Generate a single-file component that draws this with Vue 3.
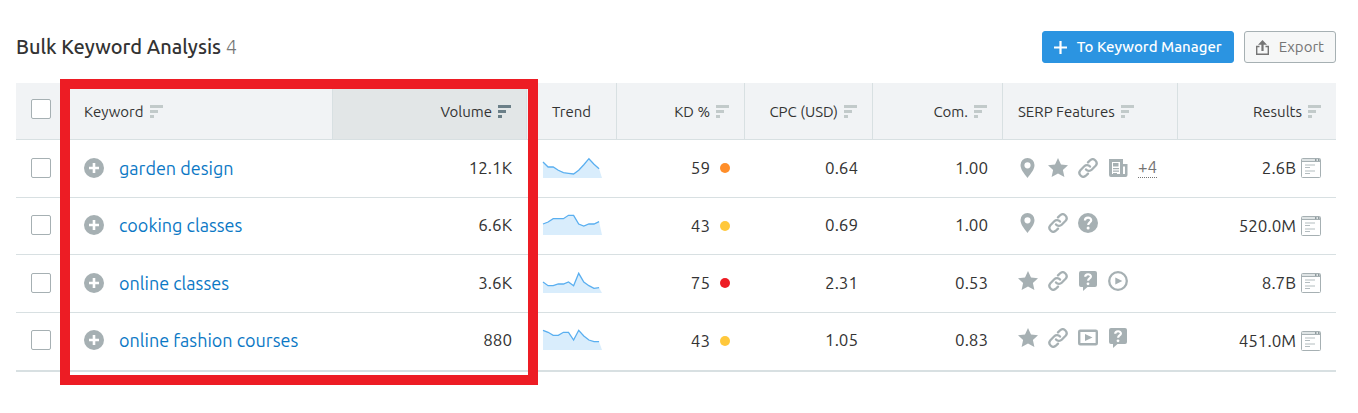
<template>
  <main class="page">
    <header class="toolbar">
      <h1 class="title">Bulk Keyword Analysis <span class="count">{{ rows.length }}</span></h1>
      <div class="actions">
        <button type="button" class="btn btn-primary">
          <svg width="13" height="13" viewBox="0 0 13 13" aria-hidden="true">
            <path d="M6.5 0v13M0 6.5h13" stroke="currentColor" stroke-width="2.2" />
          </svg>
          To Keyword Manager
        </button>
        <button type="button" class="btn btn-default">
          <svg width="13" height="15" viewBox="0 0 13 15" aria-hidden="true">
            <path d="M3.5 6.5H.7v7.8h11.6V6.5H9.5" fill="none" stroke="currentColor" stroke-width="1.4" />
            <path d="M6.5 0l4.5 4.8H7.6V11H5.4V4.8H2z" fill="currentColor" />
          </svg>
          Export
        </button>
      </div>
    </header>

    <div class="table-wrap">
      <table class="table">
        <colgroup>
          <col class="col-check" />
          <col />
          <col v-for="c in columns.slice(1)" :key="c.key" :class="'col-' + c.key" />
        </colgroup>
        <thead>
          <tr>
            <th class="cell-check"><input type="checkbox" class="check" aria-label="Select all" /></th>
            <th v-for="c in columns" :key="c.key" :class="[c.align, { active: c.active }]">
              <span class="head-label">
                {{ c.label }}
                <svg v-if="c.sort" class="sort" width="13" height="13" viewBox="0 0 13 13" aria-hidden="true">
                  <path d="M0 0h13v3H0zM0 5h8v3H0zM0 10h4v3H0z" fill="currentColor" />
                </svg>
              </span>
            </th>
          </tr>
        </thead>
        <tbody>
          <tr v-for="row in rows" :key="row.keyword">
            <td class="cell-check"><input type="checkbox" class="check" :aria-label="row.keyword" /></td>
            <td>
              <div class="keyword">
                <button type="button" class="add" :aria-label="'Add ' + row.keyword">
                  <svg width="20" height="20" viewBox="0 0 20 20">
                    <circle cx="10" cy="10" r="10" fill="#a6b0b3" />
                    <path d="M10 5v10M5 10h10" stroke="#fff" stroke-width="2.6" />
                  </svg>
                </button>
                <a href="#" class="link">{{ row.keyword }}</a>
              </div>
            </td>
            <td class="right">{{ row.volume }}</td>
            <td class="cell-trend">
              <svg class="spark" width="60" height="20" viewBox="0 0 60 20" aria-hidden="true">
                <polygon :points="areaPoints(row.trend)" fill="#d9edfc" />
                <polyline :points="linePoints(row.trend)" fill="none" stroke="#5aaff0" stroke-width="1.3" />
              </svg>
            </td>
            <td class="right">
              <span class="kd">{{ row.kd }}<i class="dot" :class="row.level"></i></span>
            </td>
            <td class="right">{{ row.cpc }}</td>
            <td class="right">{{ row.com }}</td>
            <td>
              <div class="features" :class="{ compact: !row.more }">
                <svg v-for="f in row.features" :key="f" width="20" height="20" viewBox="0 0 20 20" aria-hidden="true">
                  <path v-if="f === 'pin'" fill-rule="evenodd" d="M9.5 0a7 7 0 0 1 7 7c0 4.5-3.6 8.5-7 13-3.4-4.5-7-8.5-7-13a7 7 0 0 1 7-7zm0 4.200a3.100 3.100 0 1 0 0 6.200 3.100 3.100 0 0 0 0-6.200z" />
                  <path v-else-if="f === 'star'" d="M10 0l3 6.600 7 .7-5.100 4.800 1.500 7L10 15.600l-6.400 3.500 1.500-7L0 7.300l7-.7z" />
                  <g v-else-if="f === 'link'" fill="none" stroke="currentColor" stroke-width="2.3" stroke-linecap="round">
                    <path d="M8 11.400c1.500 1.800 4.200 1.800 5.700.3l3.900-3.900a3.900 3.900 0 0 0-5.500-5.500L10 4.400" />
                    <path d="M12 8.600C10.500 6.800 7.800 6.800 6.300 8.300l-3.900 3.900a3.900 3.900 0 0 0 5.500 5.500l2.100-2.100" />
                  </g>
                  <template v-else-if="f === 'news'">
                    <path fill-rule="evenodd" d="M1 1h14v5h4.500v11a2 2 0 0 1-2 2H3a2 2 0 0 1-2-2zm3 3v12h8V4zm11 4.500V16h2V8.500z" />
                    <path d="M5 5h5.500v3.500H5zM5 10h6v1.200H5zM5 12.500h6v1.200H5zM5 15h4v1H5z" />
                  </template>
                  <template v-else-if="f === 'question'">
                    <circle cx="10" cy="10" r="10" />
                    <path class="mark" d="M6.900 7.500C7 3.700 13.200 3.800 13.200 7.200c0 2.200-3 2.300-3 4.800" />
                    <circle class="mark-dot" cx="10.1" cy="15" r="1.5" />
                  </template>
                  <template v-else-if="f === 'faq'">
                    <path d="M3 0h14a2 2 0 0 1 2 2v12a2 2 0 0 1-2 2H9.500L5 20v-4H3a2 2 0 0 1-2-2V2a2 2 0 0 1 2-2z" />
                    <path class="mark" d="M7.200 5.800C7.300 2.400 12.900 2.500 12.900 5.500c0 1.900-2.800 2-2.800 4.200" />
                    <circle class="mark-dot" cx="10" cy="12.8" r="1.4" />
                  </template>
                  <template v-else-if="f === 'play'">
                    <circle cx="10" cy="10" r="8.8" fill="none" stroke="currentColor" stroke-width="2.3" />
                    <path d="M7.300 6.500l7 3.500-7 3.500z" />
                  </template>
                  <template v-else-if="f === 'video'">
                    <rect x="1.2" y="2.7" width="17.6" height="13.6" rx="1" fill="none" stroke="currentColor" stroke-width="2.4" />
                    <path d="M7 6l7.500 3.500L7 13z" />
                  </template>
                </svg>
                <a v-if="row.more" href="#" class="more">+{{ row.more }}</a>
              </div>
            </td>
            <td class="right">
              <span class="results">
                {{ row.results }}
                <svg width="20" height="20" viewBox="0 0 20 20" aria-hidden="true">
                  <rect x=".5" y=".5" width="19" height="19" rx="1" fill="#fff" stroke="#a6b0b3" />
                  <path d="M1 1h18v2H1z" fill="#dfe4e5" />
                  <path d="M1 3.500h18" stroke="#a6b0b3" />
                  <path d="M14 1h1.500v2H14zM17 1h1.500v2H17z" fill="#8f9b9f" />
                  <path d="M4 7h10M4 9.500h5M4 13h10M4 15.500h5" stroke="#b4bdc0" stroke-width="1.2" />
                </svg>
              </span>
            </td>
          </tr>
        </tbody>
      </table>
      <div class="highlight"></div>
    </div>
  </main>
</template>

<script setup>
const columns = [
  { key: 'keyword', label: 'Keyword', sort: true },
  { key: 'volume', label: 'Volume', sort: true, align: 'right', active: true },
  { key: 'trend', label: 'Trend', align: 'center' },
  { key: 'kd', label: 'KD %', sort: true, align: 'right' },
  { key: 'cpc', label: 'CPC (USD)', sort: true, align: 'right' },
  { key: 'com', label: 'Com.', sort: true, align: 'right' },
  { key: 'serp', label: 'SERP Features', sort: true },
  { key: 'results', label: 'Results', sort: true, align: 'right' }
]

const rows = [
  {
    keyword: 'garden design',
    volume: '12.1K',
    trend: [16, 11, 11, 7.7, 5.3, 4.7, 4, 7.7, 13.3, 19.3, 13.7, 9.3],
    kd: 59,
    level: 'orange',
    cpc: '0.64',
    com: '1.00',
    features: ['pin', 'star', 'link', 'news'],
    more: 4,
    results: '2.6B'
  },
  {
    keyword: 'cooking classes',
    volume: '6.6K',
    trend: [11, 13, 16.3, 16.3, 16.3, 19.7, 19.7, 11, 9, 11, 11, 13.3],
    kd: 43,
    level: 'yellow',
    cpc: '0.69',
    com: '1.00',
    features: ['pin', 'link', 'question'],
    results: '520.0M'
  },
  {
    keyword: 'online classes',
    volume: '3.6K',
    trend: [11, 7.3, 7.3, 9, 9, 11, 7.3, 19.7, 11, 7.3, 4.7, 5.3],
    kd: 75,
    level: 'red',
    cpc: '2.31',
    com: '0.53',
    features: ['star', 'link', 'faq', 'play'],
    results: '8.7B'
  },
  {
    keyword: 'online fashion courses',
    volume: '880',
    trend: [19.7, 17.7, 14.7, 14.7, 17.7, 17.7, 10, 19.7, 14, 10, 8.3, 8.3],
    kd: 43,
    level: 'yellow',
    cpc: '1.05',
    com: '0.83',
    features: ['star', 'link', 'video', 'faq'],
    results: '451.0M'
  }
]

// 12 months, evenly spaced
const linePoints = (trend) => trend.map((v, i) => `${i * 5.1},${20 - v}`).join(' ')

const areaPoints = (trend) => `0,20 ${linePoints(trend)} 59,20`
</script>

<style>
body {
  margin: 0;
  background: #fff;
}
</style>

<style scoped>
.page {
  padding: 31px 22px 28px 16px;
  font-family: Ubuntu, "Noto Sans", "Open Sans", sans-serif;
  font-size: 17px;
  line-height: 24px;
  color: #333;
}

.toolbar {
  display: flex;
  align-items: center;
  justify-content: space-between;
  margin-bottom: 20px;
}

.title {
  margin: 0;
  font-size: 20px;
  line-height: 32px;
  font-weight: 500;
}

.count {
  font-weight: 300;
  color: #777;
}

.actions {
  display: flex;
  gap: 10px;
}

.btn {
  display: flex;
  align-items: center;
  gap: 10px;
  height: 32px;
  padding: 0 11px;
  border: 1px solid transparent;
  border-radius: 3px;
  font-family: inherit;
  font-size: 15px;
  line-height: 20px;
  cursor: pointer;
}

.btn-primary {
  background: #2b94e1;
  border-color: #2b94e1;
  color: #fff;
  font-weight: 500;
}

.btn-default {
  background: #f6f7f7;
  border-color: #a6b0b3;
  color: #757575;
}

.table-wrap {
  position: relative;
}

.table {
  width: 100%;
  table-layout: fixed;
  border-collapse: separate;
  border-spacing: 0;
}

.col-check {
  width: 53px;
}

.col-volume {
  width: 194px;
}

.col-trend {
  width: 90px;
}

.col-kd,
.col-cpc {
  width: 128px;
}

.col-com {
  width: 130px;
}

.col-serp {
  width: 175px;
}

.col-results {
  width: 158px;
}

th {
  height: 56px;
  padding: 0 15px;
  background: #f1f3f5;
  border-bottom: 1px solid #d8e0e2;
  border-right: 1px solid #d8e0e2;
  font-size: 15px;
  font-weight: 400;
  text-align: left;
  white-space: nowrap;
}

th.cell-check,
th:last-child {
  border-right: 0;
}

th.active {
  background: #e2e6e7;
}

td {
  height: 54px;
  padding: 0 15px 2px;
  border-bottom: 1px solid #d8e0e2;
  white-space: nowrap;
}

td.cell-trend {
  padding-left: 16px;
}

tbody tr:nth-child(odd) td {
  height: 55px;
}

tbody tr:last-child td {
  padding-bottom: 3px;
  border-bottom-width: 2px;
}

.right {
  text-align: right;
}

.center {
  text-align: center;
}

.head-label {
  display: inline-flex;
  align-items: center;
  gap: 6px;
  vertical-align: middle;
}

.sort {
  color: #c2caca;
}

.active .sort {
  color: #6b7f88;
}

.check {
  appearance: none;
  display: block;
  width: 20px;
  height: 20px;
  margin: 0;
  background: #fff;
  border: 1px solid #a6b0b3;
  border-radius: 2px;
}

th .check {
  margin-bottom: 4px;
}

.check:checked {
  background: #2b94e1;
}

.keyword {
  display: flex;
  align-items: center;
  gap: 15px;
}

.add {
  width: 20px;
  height: 20px;
  padding: 0;
  border: 0;
  background: none;
  cursor: pointer;
}

.add svg,
.spark {
  display: block;
}

.link {
  color: #0b78c5;
  font-size: 18px;
  text-decoration: none;
}

.spark {
  overflow: visible;
}

.kd {
  display: inline-flex;
  align-items: center;
  gap: 10px;
  vertical-align: middle;
}

.dot {
  width: 10px;
  height: 10px;
  border-radius: 50%;
}

.orange {
  background: #ff8e29;
}

.yellow {
  background: #ffc83c;
}

.red {
  background: #ed1c24;
}

.features {
  display: flex;
  align-items: center;
  gap: 10px;
  color: #a6b0b3;
  fill: currentColor;
}

.features.compact {
  padding-bottom: 4px;
}

.mark {
  fill: none;
  stroke: #fff;
  stroke-width: 2.2;
}

.mark-dot {
  fill: #fff;
}

.more {
  border-bottom: 1px dotted #757575;
  color: #757575;
  font-size: 17px;
  line-height: 20px;
  text-decoration: none;
}

.results {
  display: inline-flex;
  align-items: center;
  gap: 5px;
  vertical-align: middle;
}

/* frame around the Keyword and Volume columns */
.highlight {
  position: absolute;
  top: -4px;
  right: 798px;
  bottom: -13px;
  left: 44px;
  border: 10px solid #ed1c24;
  pointer-events: none;
}
</style>
